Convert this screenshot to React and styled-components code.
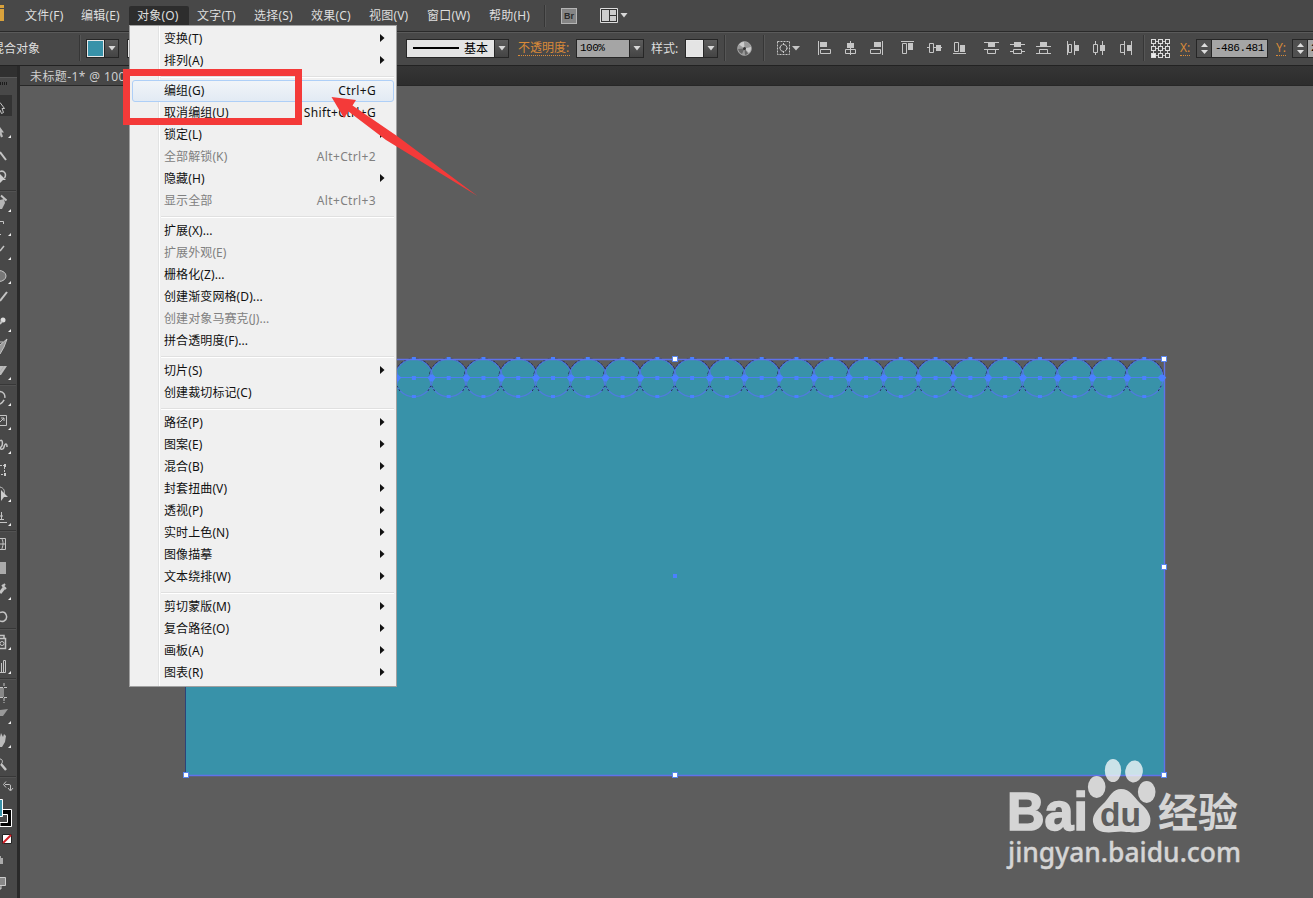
import { Fragment } from 'react';
import styled, { createGlobalStyle } from 'styled-components';

const topMenus = [
  { label: '文件(F)', width: 56 },
  { label: '编辑(E)', width: 56 },
  { label: '对象(O)', width: 60, open: true },
  { label: '文字(T)', width: 57 },
  { label: '选择(S)', width: 57 },
  { label: '效果(C)', width: 58 },
  { label: '视图(V)', width: 58 },
  { label: '窗口(W)', width: 62 },
  { label: '帮助(H)', width: 56 },
];

const menuGroups = [
  [
    { label: '变换(T)', sub: true },
    { label: '排列(A)', sub: true },
  ],
  [
    { label: '编组(G)', keys: 'Ctrl+G', active: true },
    { label: '取消编组(U)', keys: 'Shift+Ctrl+G' },
    { label: '锁定(L)', sub: true },
    { label: '全部解锁(K)', keys: 'Alt+Ctrl+2', disabled: true },
    { label: '隐藏(H)', sub: true },
    { label: '显示全部', keys: 'Alt+Ctrl+3', disabled: true },
  ],
  [
    { label: '扩展(X)...' },
    { label: '扩展外观(E)', disabled: true },
    { label: '栅格化(Z)...' },
    { label: '创建渐变网格(D)...' },
    { label: '创建对象马赛克(J)...', disabled: true },
    { label: '拼合透明度(F)...' },
  ],
  [{ label: '切片(S)', sub: true }, { label: '创建裁切标记(C)' }],
  [
    { label: '路径(P)', sub: true },
    { label: '图案(E)', sub: true },
    { label: '混合(B)', sub: true },
    { label: '封套扭曲(V)', sub: true },
    { label: '透视(P)', sub: true },
    { label: '实时上色(N)', sub: true },
    { label: '图像描摹', sub: true },
    { label: '文本绕排(W)', sub: true },
  ],
  [
    { label: '剪切蒙版(M)', sub: true },
    { label: '复合路径(O)', sub: true },
    { label: '画板(A)', sub: true },
    { label: '图表(R)', sub: true },
  ],
];

// the panel is docked half off screen, so only the right part of each icon is drawn
const toolGroups = [
  [
    { name: 'select', active: true, art: <path d="M0 8.5L4.5 14.5H2L3.5 18.5L1.5 19.5L0 16" fill="none" /> },
    { name: 'direct', more: true, art: <path d="M0 9L4 14.5H1.5L3 18.5L1 19.5L0 17V9z" fill="#bbb" stroke="none" /> },
    { name: 'wand', art: <path d="M0 10L6 18" strokeWidth="2" /> },
    { name: 'lasso', art: <><path d="M0 5.5C4 4 7 8 4.500 12" fill="none" strokeWidth="1.500" /><path d="M0 8L6 14H3L0 17z" fill="#ccc" stroke="none" /></> },
  ],
  [
    { name: 'pen', more: true, art: <><path d="M0 8L4 7L5 11L2 17H0z" fill="#b4b4b4" stroke="none" /><path d="M1 3.500L6.500 8.500" strokeWidth="2" /></> },
    { name: 'type', more: true, art: <path d="M0 5.500H3.500V8M0 18.500H1" fill="none" /> },
    { name: 'line', more: true, art: <path d="M0 11L4 6" strokeWidth="1.500" /> },
    { name: 'ellipse', more: true, art: <ellipse cx="-1" cy="12" rx="7" ry="5.500" fill="#777" /> },
    { name: 'brush', art: <path d="M0 13L7 4" strokeWidth="2" /> },
    { name: 'pencil', more: true, art: <><circle cx="3" cy="8" r="2.500" fill="#ddd" stroke="none" /><path d="M0 12L2 9" strokeWidth="2" /></> },
    { name: 'blob', art: <><path d="M0 9L7 3L4 11L0 18" fill="#999" /><path d="M0 6H3" /></> },
    { name: 'eraser', more: true, art: <><path d="M0 6H7L1 15H0z" fill="#bbb" stroke="none" /><path d="M0 12L4 6" stroke="#aaa" /></> },
  ],
  [
    { name: 'rotate', more: true, art: <path d="M0 5.500C6 6 7 14 0 18" fill="none" strokeWidth="1.500" strokeDasharray="9 2" /> },
    { name: 'scale', more: true, art: <path d="M0 5.500H6.500V15.500H0M0 12L4 8M1 8H4V11" fill="none" /> },
    { name: 'width', more: true, art: <path d="M0 7C3 4 3 12 1 13C-1 15 3 17 4 13S7 9 7 13" fill="none" strokeWidth="1.500" /> },
    { name: 'free', art: <><path d="M0 7.500H4.500V16.500H0" fill="none" strokeDasharray="2 1" /><path d="M4 6h2v3H4zM4 15h2v3H4z" fill="#ccc" stroke="none" /></> },
    { name: 'shape', more: true, art: <><path d="M0 5C4 6 5 9 4 12" fill="none" /><path d="M1 8L8 15H4L1 19z" fill="#ccc" stroke="none" /></> },
    { name: 'perspective', more: true, art: <path d="M1.500 6V14M0 13.500H4M0 16.500H7M0 10H3" fill="none" /> },
  ],
  [
    { name: 'mesh', art: <path d="M0 6.500H5.500V17.500H0M0 12H6M1.500 6C4 10 3 14 1.500 18" fill="none" /> },
    { name: 'gradient', art: <rect x="-1" y="6" width="7" height="12" fill="#aaa" stroke="none" /> },
    { name: 'dropper', more: true, art: <><path d="M0 13L4 8" strokeWidth="3" /><path d="M2 5L6 9M3 6L5 4" strokeWidth="2" /></> },
    { name: 'blend', art: <path d="M0 8.500C6 6 9 14 4 17C2 18 0 17 0 17" fill="none" strokeWidth="1.500" /> },
  ],
  [
    { name: 'spray', more: true, art: <><path d="M0 5.500H4V8M0 8.500H5.500V18.500H0" fill="none" strokeWidth="1.500" /><circle cx="2" cy="13.500" r="2" fill="none" /></> },
    { name: 'graph', more: true, art: <path d="M1.500 18V9M0 18.500H5.500V6.500H3.500V18" fill="none" /> },
  ],
  [
    { name: 'artboard', art: <><path d="M0 8h4v9H0z" fill="#888" stroke="none" /><path d="M0 7.500H8M4 3V7M4 18V23M0 17.500H8" strokeDasharray="3 1" /></> },
    { name: 'slice', more: true, art: <path d="M0 6L8 5L3 12H0z" fill="#999" stroke="none" /> },
    { name: 'hand', more: true, art: <path d="M0 9L1 5L3 9L4 6L6 8L5 14L2 19H0z" fill="#bbb" stroke="none" /> },
    { name: 'zoom', art: <><path d="M0 7C3 7 3 11 1 12" fill="none" /><path d="M1 12L6 18" strokeWidth="2.500" /></> },
  ],
];

const alignGroups = [
  [
    <><path d="M.5 0V14M2.500 8.500h10v4h-10z" /><path className="solid" d="M2 1h7v5H2z" /></>,
    <><path d="M6.500 0V14M1.500 8.500h10v4h-10z" /><path className="solid" d="M3 2h7v5H3z" /></>,
    <><path d="M12.500 0V14M.5 8.500h10v4h-10z" /><path className="solid" d="M4 1h7v5H4z" /></>,
  ],
  [
    <><path d="M0 .5H13M1.500 2.500h4v10h-4z" /><path className="solid" d="M7 2h5v7H7z" /></>,
    <><path d="M0 6.500H15" /><path d="M2.500 2.500h4v9h-4z" fill="#484848" /><path className="solid" d="M9 4h5v6H9z" /></>,
    <><path d="M0 12.500H13M1.500 1.500h4v9h-4z" /><path className="solid" d="M7 4h5v7H7z" /></>,
  ],
  [
    <><path d="M0 1.500H15M0 8.500H15M3.500 8.500h8v4h-8z" /><path className="solid" d="M4 2h7v4H4z" /></>,
    <><path d="M0 3.500H15M0 10.500H15" /><path d="M3.500 8.500h8v4h-8z" fill="#484848" /><path className="solid" d="M4 1h7v5H4z" /></>,
    <><path d="M0 5.500H15M0 12.500H15M3.500 8.500h8v4h-8z" /><path className="solid" d="M4 1h7v4H4z" /></>,
  ],
  [
    <><path d="M.5 0V14M7.500 0V14M1.500 3.500h3v8h-3z" /><path className="solid" d="M8 4h4v6H8z" /></>,
    <><path d="M2.500 0V14M9.500 0V14" /><path d="M.5 3.500h4v8h-4z" fill="#484848" /><path className="solid" d="M7 4h5v6H7z" /></>,
    <><path d="M5.500 0V14M12.500 0V14M1.500 3.500h4v8h-4z" /><path className="solid" d="M8 4h4v6H8z" /></>,
  ],
];

const scallops = Array.from({ length: 28 }, (_, i) => 205.2 + i * 34.78);

const Caret = () => (
  <svg width="8" height="5" viewBox="0 0 8 5">
    <path d="M.5 0H7.500L4 4.500z" fill="#d8d8d8" />
  </svg>
);

const Spinner = () => (
  <StyledSpinner>
    <svg width="7" height="4"><path d="M0 4L3.500 0L7 4z" fill="#ddd" /></svg>
    <svg width="7" height="4"><path d="M0 0L3.500 4L7 0z" fill="#ddd" /></svg>
  </StyledSpinner>
);

const MenuBar = () => (
  <StyledMenuBar>
    <StyledLogo />
    {topMenus.map((menu) => (
      <StyledTopMenu key={menu.label} $width={menu.width} $open={menu.open}>
        {menu.label}
      </StyledTopMenu>
    ))}
    <StyledDivider $left={7} $height={22} />
    <StyledBridge>Br</StyledBridge>
    <StyledWorkspace>
      <svg width="18" height="15" viewBox="0 0 18 15">
        <path d="M.5.5h17v14H.5z" fill="#333" stroke="#ddd" />
        <path d="M2 2h7v11H2zM10 2h6v5h-6zM10 8h6v5h-6z" fill="#ccc" />
      </svg>
      <Caret />
    </StyledWorkspace>
  </StyledMenuBar>
);

const OptionsBar = () => (
  <StyledOptionsBar>
    <StyledObjectKind>混合对象</StyledObjectKind>
    <StyledDivider $left={0} $height={26} />
    <StyledField $left={5}>
      <StyledSwatch $color="#3892a9" />
      <StyledDropButton><Caret /></StyledDropButton>
    </StyledField>
    <StyledField $left={8}>
      <StyledSwatch $color="#fff" />
    </StyledField>
    <StyledField $left={260}>
      <StyledStroke>
        <StyledStrokeLine />
        基本
      </StyledStroke>
      <StyledDropButton><Caret /></StyledDropButton>
    </StyledField>
    <StyledLink $left={9} $width={52}>不透明度:</StyledLink>
    <StyledField $left={6}>
      <StyledValue $width={52}>100%</StyledValue>
      <StyledDropButton><Caret /></StyledDropButton>
    </StyledField>
    <StyledCaption>样式:</StyledCaption>
    <StyledField $left={4}>
      <StyledSwatch $color="#e4e4e4" />
      <StyledDropButton><Caret /></StyledDropButton>
    </StyledField>
    <StyledDivider $left={6} $height={26} />
    <StyledIcon $left={11} width="15" height="15" viewBox="0 0 15 15">
      <circle cx="7.500" cy="7.500" r="6.800" fill="#999" stroke="#aaa" />
      <path d="M7.500 7.500L2 3.500A7 7 0 0 1 7 .8zM7.500 7.500L14 6A7 7 0 0 1 12 12z" fill="#ccc" stroke="none" />
      <path d="M7.500 7.500L1 8A7 7 0 0 0 5 13zM7.500 7.500L8 14A6 6 0 0 0 11 12.500z" fill="#666" stroke="none" />
      <circle cx="7.500" cy="7.500" r="1.500" fill="#333" stroke="none" />
    </StyledIcon>
    <StyledDivider $left={11} $height={26} />
    <StyledIcon $left={12} width="23" height="14" viewBox="0 0 23 14">
      <path d="M.5.5h12v13H.5z" strokeDasharray="2 1" />
      <circle cx="6.500" cy="7" r="3.500" strokeDasharray="4 1.500" />
      <path d="M6.500 2V4M6.500 10V12M2 7H4M9 7H11" />
      <path className="solid" d="M15 5H23L19 9.500z" />
    </StyledIcon>
    <StyledAligns>
      {alignGroups.map((group, g) => (
        <StyledAlignGroup key={g}>
          {group.map((art, i) => (
            <StyledIcon key={i} $left={0} width="15" height="14" viewBox="0 0 15 14">
              {art}
            </StyledIcon>
          ))}
        </StyledAlignGroup>
      ))}
    </StyledAligns>
    <StyledDivider $left={9} $height={26} />
    <StyledIcon $left={5} width="20" height="20" viewBox="0 0 20 20">
      <path d="M3.500 3.500H17M3.500 10.500H17M3.500 17.500H17M3.500 3V17M10.500 3V17M17.500 3V17" />
      {[0, 1, 2].map((r) =>
        [0, 1, 2].map((c) => (
          <rect
            key={`${r}${c}`}
            x={1.5 + c * 7}
            y={1.5 + r * 7}
            width="4"
            height="4"
            fill={r === 2 && c === 0 ? '#eee' : '#484848'}
            stroke="#ddd"
          />
        )),
      )}
    </StyledIcon>
    <StyledLink $left={10} $width={10}>X:</StyledLink>
    <StyledField $left={6}>
      <Spinner />
      <StyledValue $width={55}>-486.481</StyledValue>
    </StyledField>
    <StyledLink $left={8} $width={10}>Y:</StyledLink>
    <StyledField $left={6}>
      <Spinner />
      <StyledValue $width={55}>2</StyledValue>
    </StyledField>
  </StyledOptionsBar>
);

const Toolbox = () => (
  <StyledToolbox>
    <StyledToolHeader />
    <StyledGrip />
    {toolGroups.map((group, g) => (
      <Fragment key={g}>
        {group.map((tool) => (
          <StyledTool key={tool.name} $active={tool.active}>
            <svg width="14" height="24" viewBox="0 0 14 24" stroke="#c4c4c4">
              {tool.art}
              {tool.more && <path d="M8 20H11V17z" fill="#eee" stroke="none" />}
            </svg>
          </StyledTool>
        ))}
        <StyledToolLine />
      </Fragment>
    ))}
    <svg width="14" height="120" viewBox="0 0 14 120">
      <path d="M5 6.500H9.500Q10.500 6.500 10.500 8V12M6 3.500L3.500 6.500L6 9.500M8 10L10.500 13L13 10" fill="none" stroke="#c4c4c4" />
      <path d="M0 31.500H11.500V48.500H0z" fill="#000" stroke="#fff" />
      <path d="M0 36.500H7.500V44.500H0" fill="#484848" stroke="#fff" />
      <path d="M-1 21.500H2.500V38.500H-1z" fill="#3892a9" stroke="#fff" />
      <path d="M2.500 56.500h9v9h-9z" fill="#fff" stroke="#222" />
      <path d="M3 65L11 57" stroke="#d21f26" strokeWidth="2" />
      <path d="M0 80h3v6H0zM0 78h1v2H0z" fill="#aaa" />
      <path d="M0 99.500H5.500V107.500H0M1 108V111H-1" fill="#888" stroke="#ccc" />
    </svg>
  </StyledToolbox>
);

const Artwork = () => (
  <StyledArtwork width="1293" height="812" viewBox="20 86 1293 812">
    <g fill="#3892a9">
      <rect x="186" y="378" width="978.500" height="397" />
      {scallops.map((x) => (
        <circle key={x} cx={x} cy="378" r="19.300" stroke="#1c2030" strokeWidth="1.200" strokeDasharray="3 1" />
      ))}
      <path d="M187 378H1164V775H187z" />
    </g>
    <g fill="none" stroke="#5477e6">
      {scallops.map((x) => (
        <Fragment key={x}>
          <circle cx={x} cy="378" r="18.800" strokeWidth="1.200" opacity=".85" />
          <path d={`M${x + 14} 391L${x + 18} 384`} stroke="#20344f" strokeDasharray="2 2" />
          <path d={`M${x - 14} 391L${x - 18} 384`} stroke="#20344f" strokeDasharray="2 2" />
        </Fragment>
      ))}
      <path d="M186 377.500H1164" stroke="#4b7df5" strokeWidth="1.200" />
      <path d="M185.500 359.500H1164.500V775.500H185.500" stroke="#5f72ea" strokeWidth="1.400" />
    </g>
    <path d="M185.500 378V775" stroke="#2c4378" />
    <g fill="#4a80ff">
      {scallops.map((x) => (
        <Fragment key={x}>
          <path d={`M${x - 2} 357h4v3h-4zM${x - 2} 376h4v4h-4zM${x - 2} 395h4v3h-4z`} />
          <path d={`M${x + 13.500} 377.500l3-3h2.500l3 3l-3 4h-2.500z`} />
        </Fragment>
      ))}
      <rect x="673" y="574" width="4" height="4" />
    </g>
    <g fill="#fff" stroke="#5a86ee">
      {[[675, 359], [1164, 359], [1164, 567], [186, 775], [675, 775], [1164, 775]].map(([x, y]) => (
        <rect key={`${x}-${y}`} x={x - 2.500} y={y - 2.500} width="5" height="5" />
      ))}
    </g>
  </StyledArtwork>
);

const ObjectMenu = () => (
  <StyledDropdown>
    {menuGroups.map((group, g) => (
      <Fragment key={g}>
        {g > 0 && <StyledMenuLine />}
        {group.map((item) => (
          <StyledMenuItem key={item.label} $active={item.active} $disabled={item.disabled}>
            <span>{item.label}</span>
            {item.keys && <StyledKeys>{item.keys}</StyledKeys>}
            {item.sub && (
              <StyledSubArrow width="5" height="8" viewBox="0 0 5 8">
                <path d="M0 0L4.500 4L0 8z" fill="#111" />
              </StyledSubArrow>
            )}
          </StyledMenuItem>
        ))}
      </Fragment>
    ))}
  </StyledDropdown>
);

const Watermark = () => (
  <StyledWatermark width="250" height="125" viewBox="1000 755 250 125">
    <g fill="#fff" opacity=".74">
      <ellipse cx="1096.700" cy="787" rx="8.800" ry="11" />
      <ellipse cx="1113" cy="770.500" rx="8.200" ry="11.500" />
      <ellipse cx="1134" cy="771.500" rx="8.800" ry="11" transform="rotate(8 1134 771.500)" />
      <ellipse cx="1146.700" cy="792" rx="8.800" ry="11" />
      <path d="M1121 789C1130 789 1134 797 1140 803C1148 810 1152 816 1150 824C1147 834 1135 833 1121 831.500C1107 833 1095 834 1093 822C1092 814 1099 808 1105 802C1110 796 1113 789 1121 789z" />
      <text x="1007" y="830" fontFamily="Liberation Sans, sans-serif" fontWeight="700" fontSize="54" textLength="81" lengthAdjust="spacingAndGlyphs" stroke="#fff" strokeWidth="1.600">Bai</text>
      <text x="1158" y="827" fontFamily="Noto Sans CJK SC, sans-serif" fontWeight="700" fontSize="40" textLength="80">经验</text>
      <text x="1008" y="862" fontFamily="Noto Sans, sans-serif" fontWeight="500" fontSize="27" textLength="233" lengthAdjust="spacingAndGlyphs" stroke="#fff" strokeWidth=".3">jingyan.baidu.com</text>
    </g>
    <text x="1100" y="826" fontFamily="Liberation Sans, sans-serif" fontWeight="700" fontSize="34" textLength="41" lengthAdjust="spacingAndGlyphs" fill="#5d5d5d">du</text>
  </StyledWatermark>
);

const App = () => (
  <>
    <GlobalStyle />
    <StyledWindow>
      <MenuBar />
      <OptionsBar />
      <StyledWorkArea>
        <Toolbox />
        <StyledDocument>
          <StyledTabs>
            <StyledTab>未标题-1* @ 100%</StyledTab>
          </StyledTabs>
          <Artwork />
        </StyledDocument>
      </StyledWorkArea>
      <ObjectMenu />
      <StyledHighlight />
      <StyledArrow width="150" height="102" viewBox="330 96 150 102">
        <path d="M331.500 97L356 100L352.500 105.500L397 136L477.500 196L386 140L348.500 111.500L344 118z" fill="#f43a39" />
      </StyledArrow>
      <Watermark />
    </StyledWindow>
  </>
);

export default App;

const GlobalStyle = createGlobalStyle`
  * {
    box-sizing: border-box;
  }
  body {
    margin: 0;
    background: #5d5d5d;
    font-family: 'Noto Sans', 'Noto Sans CJK SC', sans-serif;
    font-size: 12px;
    overflow: hidden;
  }
  svg {
    display: block;
    flex: none;
  }
`;
const StyledWindow = styled.div`
  position: relative;
  display: flex;
  flex-direction: column;
  width: 1313px;
  height: 898px;
  overflow: hidden;
  color: #dedede;
`;
const StyledMenuBar = styled.header`
  display: flex;
  align-items: center;
  height: 31px;
  flex: none;
  background: #484848;
`;
const StyledLogo = styled.div`
  width: 4px;
  height: 16px;
  margin-right: 13px;
  margin-bottom: 5px;
  background: linear-gradient(#d9a23c 0 3px, #484848 3px 4px, #d9a23c 4px);
`;
const StyledTopMenu = styled.div`
  width: ${({ $width }) => $width}px;
  height: 20px;
  margin-top: 1px;
  padding-left: 8px;
  line-height: 19px;
  letter-spacing: 0.2px;
  border-radius: 2px 2px 0 0;
  white-space: nowrap;
  background: ${({ $open }) => ($open ? '#2d2d2d' : 'transparent')};
`;
const StyledDivider = styled.div`
  flex: none;
  width: 2px;
  height: ${({ $height }) => $height}px;
  margin-left: ${({ $left }) => $left}px;
  background: linear-gradient(90deg, #363636 50%, #565656 50%);
`;
const StyledBridge = styled.div`
  width: 16px;
  height: 16px;
  margin-left: 15px;
  border: 1px solid #b5b5b5;
  background: #858585;
  color: #2b2b2b;
  font: 700 9px/14px 'Liberation Sans', sans-serif;
  text-align: center;
`;
const StyledWorkspace = styled.div`
  display: flex;
  align-items: center;
  gap: 2px;
  margin-left: 23px;
`;
const StyledOptionsBar = styled.div`
  display: flex;
  align-items: center;
  flex: none;
  height: 35px;
  padding-bottom: 1px;
  border-top: 1px solid #2a2a2a;
  border-bottom: 1px solid #222;
  background: #484848;
  box-shadow: inset 0 1px #5a5a5a;
  white-space: nowrap;
  overflow: hidden;
`;
const StyledObjectKind = styled.div`
  flex: none;
  width: 87px;
  margin-left: -8px;
  padding-bottom: 1px;
`;
const StyledField = styled.div`
  display: flex;
  flex: none;
  gap: 1px;
  height: 19px;
  margin-left: ${({ $left }) => $left}px;
  padding: 1px;
  background: #262626;
`;
const StyledSwatch = styled.div`
  width: 17px;
  border: 1px solid #e8e8e8;
  background: ${({ $color }) => $color};
`;
const StyledDropButton = styled.div`
  display: flex;
  align-items: center;
  justify-content: center;
  width: 13px;
  background: linear-gradient(#5c5c5c, #444);
`;
const StyledStroke = styled.div`
  display: flex;
  align-items: center;
  gap: 5px;
  width: 87px;
  padding-left: 6px;
  background: #e4e4e4;
  color: #000;
`;
const StyledStrokeLine = styled.div`
  width: 46px;
  height: 2px;
  background: #000;
`;
const StyledLink = styled.div`
  flex: none;
  width: ${({ $width }) => $width}px;
  height: 16px;
  margin-left: ${({ $left }) => $left}px;
  line-height: 16px;
  border-bottom: 1px dotted #d98a38;
  color: #d98a38;
`;
const StyledValue = styled.div`
  width: ${({ $width }) => $width}px;
  padding-left: 3px;
  background: #a5a5a5;
  color: #000;
  font: 11px/17px 'Liberation Mono', monospace;
  letter-spacing: -0.5px;
`;
const StyledCaption = styled.div`
  flex: none;
  width: 30px;
  margin-left: 7px;
`;
const StyledIcon = styled.svg`
  margin-left: ${({ $left }) => $left}px;
  fill: none;
  stroke: #c6c6c6;
  .solid {
    fill: #c6c6c6;
    stroke: none;
  }
`;
const StyledAligns = styled.div`
  display: flex;
  flex: none;
  gap: 16px;
  margin-left: 18px;
`;
const StyledAlignGroup = styled.div`
  display: flex;
  gap: 11px;
`;
const StyledSpinner = styled.div`
  display: flex;
  flex-direction: column;
  align-items: center;
  justify-content: space-evenly;
  width: 14px;
  background: #505050;
`;
const StyledWorkArea = styled.main`
  display: flex;
  flex: 1;
  min-height: 0;
`;
const StyledToolbox = styled.aside`
  flex: none;
  width: 20px;
  border-right: 3px solid #292929;
  background: #484848;
  overflow: hidden;
`;
const StyledToolHeader = styled.div`
  height: 12px;
  background: #303030;
  border-bottom: 1px solid #5a5a5a;
`;
const StyledGrip = styled.div`
  width: 8px;
  height: 3px;
  margin: 4px 0 9px;
  background: repeating-linear-gradient(90deg, #1c1c1c 0 1px, #484848 1px 2px);
`;
const StyledTool = styled.div`
  width: 12px;
  height: 24px;
  background: ${({ $active }) => ($active ? 'linear-gradient(#484848 1px, #333 1px 22px, #484848 22px)' : 'none')};
`;
const StyledToolLine = styled.div`
  width: 16px;
  height: 2px;
  border-top: 1px solid #373737;
  background: #525252;
`;
const StyledDocument = styled.section`
  flex: 1;
  min-width: 0;
  background: #5d5d5d;
`;
const StyledTabs = styled.div`
  display: flex;
  height: 20px;
  border-bottom: 1px solid #272727;
  background: linear-gradient(#353535, #2d2d2d);
`;
const StyledTab = styled.div`
  width: 210px;
  padding-left: 10px;
  background: #474747;
  color: #cfcfcf;
  line-height: 21px;
  letter-spacing: 0.4px;
  white-space: nowrap;
`;
const StyledArtwork = styled.svg``;
const StyledDropdown = styled.nav`
  position: absolute;
  left: 129px;
  top: 25px;
  width: 268px;
  height: 662px;
  padding: 2px;
  border: 1px solid #a0a0a0;
  background: linear-gradient(90deg, #f0f0f0 28px, #e2e3e3 28px 29px, #fff 29px 30px, #f0f0f0 30px);
  color: #111;
`;
const StyledMenuLine = styled.div`
  height: 8px;
  margin-left: 29px;
  background: linear-gradient(transparent 4px, #e0e0e0 4px 5px, #fff 5px 6px, transparent 6px);
`;
const StyledMenuItem = styled.div`
  display: flex;
  align-items: center;
  height: 22px;
  padding: 0 17px 2px 31px;
  border: 1px solid ${({ $active }) => ($active ? '#aecff7' : 'transparent')};
  border-radius: 3px;
  background: ${({ $active }) => ($active ? 'linear-gradient(#f1f4f8, #e2eaf4)' : 'none')};
  color: ${({ $disabled }) => ($disabled ? '#808080' : '#111')};
  letter-spacing: 0.1px;
  white-space: nowrap;
`;
const StyledKeys = styled.span`
  margin-left: auto;
  letter-spacing: 0.35px;
`;
const StyledSubArrow = styled.svg`
  margin-left: auto;
  margin-right: -9px;
`;
const StyledHighlight = styled.div`
  position: absolute;
  left: 123px;
  top: 69px;
  width: 179px;
  height: 56px;
  border: 7px solid #f43a39;
`;
const StyledArrow = styled.svg`
  position: absolute;
  left: 330px;
  top: 96px;
`;
const StyledWatermark = styled.svg`
  position: absolute;
  left: 1000px;
  top: 755px;
`;
